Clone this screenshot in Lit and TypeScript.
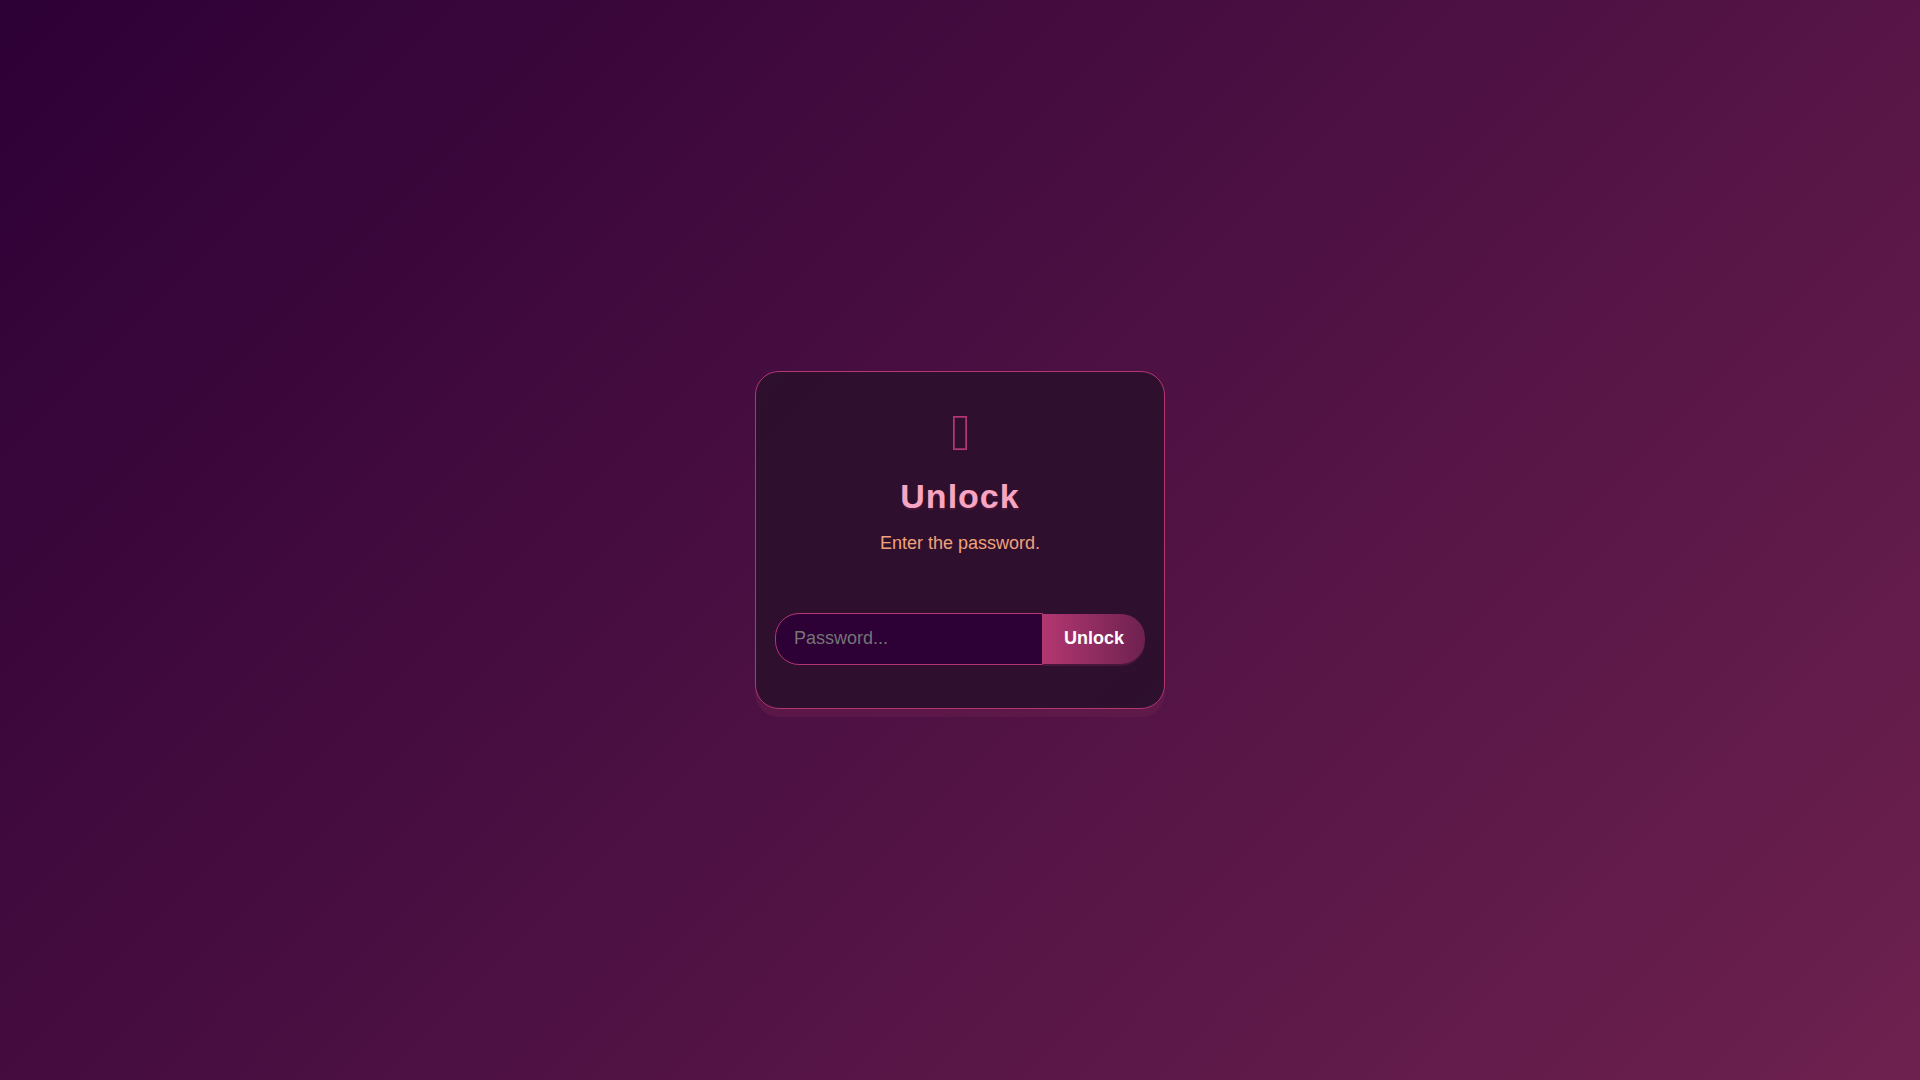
import { LitElement, html, css } from "lit";
import { customElement } from "lit/decorators.js";

@customElement("app-root")
export class AppRoot extends LitElement {
  static styles = css`
    :host {
      display: flex;
      align-items: center;
      justify-content: center;
      min-height: 100vh;
      box-sizing: border-box;
      background: linear-gradient(135deg, #2d0036 0%, #6d214f 100%);
      font-family: "Liberation Sans", Arial, sans-serif;
    }
    .card {
      box-sizing: border-box;
      width: 100%;
      max-width: 410px;
      padding: 32px 19px 43px;
      border: 1px solid #b33771;
      border-radius: 24px;
      background: linear-gradient(135deg, #2d102d 0%, #2f0f2e 25%, #2f0f2e 75%, #2d102d 100%);
      box-shadow: 0 8px 0 rgba(109, 33, 79, 0.4);
      text-align: center;
    }
    .icon {
      display: block;
      width: 16px;
      height: 36px;
      margin: 11px auto 0;
      fill: none;
      stroke: #b33771;
    }
    .title {
      margin: 25px 0 0;
      color: #f8a5c2;
      font-size: 34px;
      line-height: 40px;
      font-weight: 700;
      letter-spacing: 1px;
      text-shadow: 0 2px 0 rgba(109, 33, 79, 0.4);
    }
    .hint {
      margin: 17px 0 0;
      color: #f0a27a;
      font-size: 18px;
      line-height: 20px;
    }
    .form {
      display: flex;
      align-items: center;
      margin: 60px 0 0;
    }
    .field {
      box-sizing: border-box;
      flex: 1;
      min-width: 0;
      height: 52px;
      padding: 0 18px 2px;
      border: 1px solid #b33771;
      border-radius: 24px 0 0 24px;
      outline: none;
      background: #2d0036;
      color: #f8a5c2;
      font: inherit;
      font-size: 18px;
    }
    .field::placeholder {
      color: #757575;
    }
    .submit {
      height: 50px;
      padding: 0 21px 2px;
      border: 0;
      border-radius: 0 24px 24px 0;
      background: linear-gradient(90deg, #b33771 0%, #6d214f 100%);
      box-shadow: 0 2px 0 rgba(109, 33, 79, 0.4);
      color: #fff;
      font: inherit;
      font-size: 18px;
      font-weight: 700;
      cursor: pointer;
    }
  `;

  private onSubmit(event: Event) {
    event.preventDefault();
  }

  render() {
    return html`
      <main class="card">
        <svg class="icon" viewBox="0 0 16 36" aria-hidden="true">
          <rect x="1.5" y="1.5" width="13" height="33" />
          <rect x="2.5" y="2.5" width="11" height="31" opacity="0.7" />
        </svg>
        <h1 class="title">Unlock</h1>
        <p class="hint">Enter the password.</p>
        <form class="form" @submit=${this.onSubmit}>
          <input class="field" type="password" placeholder="Password..." aria-label="Password" />
          <button class="submit" type="submit">Unlock</button>
        </form>
      </main>
    `;
  }
}
